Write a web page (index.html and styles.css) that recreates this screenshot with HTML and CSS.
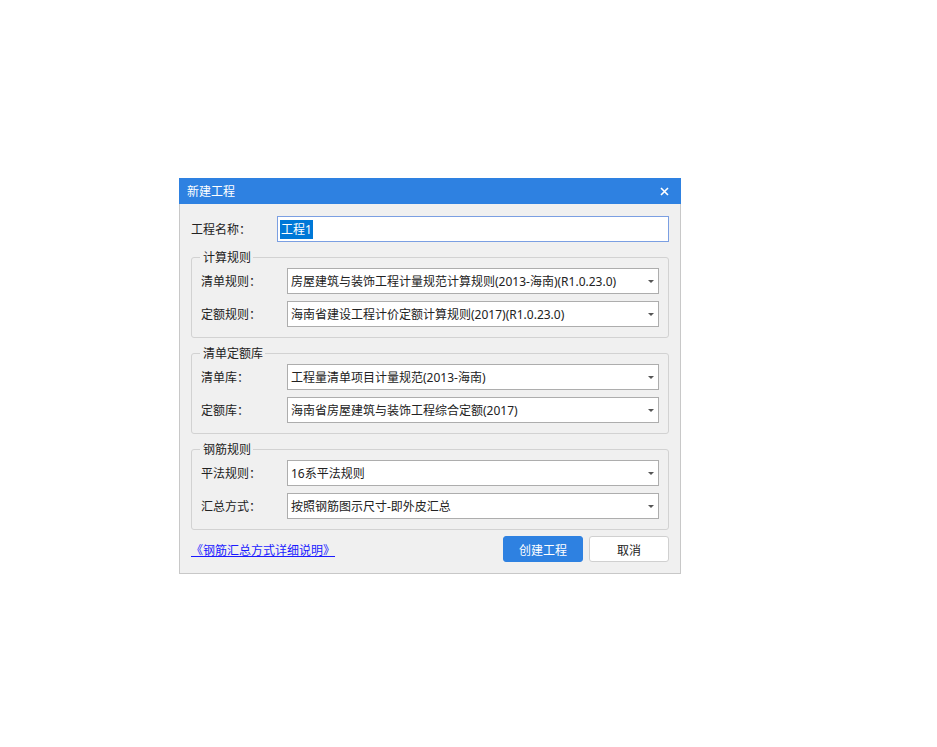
FILE: index.html
```html
<!DOCTYPE html>
<html lang="zh-CN">
<head>
<meta charset="utf-8">
<title>新建工程</title>
<link rel="stylesheet" href="styles.css">
</head>
<body>
<div class="dialog">
  <div class="titlebar">
    <span class="title">新建工程</span>
    <svg class="close" width="9" height="9" viewBox="0 0 9 9"><path d="M1 1L8 8M8 1L1 8" stroke="#fff" stroke-width="1.6" fill="none"/></svg>
  </div>
  <div class="body">
    <div class="row name-row">
      <span class="label">工程名称：</span>
      <div class="input"><span class="sel">工程1</span></div>
    </div>

    <div class="group">
      <span class="legend">计算规则</span>
      <div class="row">
        <span class="label">清单规则：</span>
        <div class="select"><span class="val">房屋建筑与装饰工程计量规范计算规则(2013-海南)(R1.0.23.0)</span><span class="arrow"></span></div>
      </div>
      <div class="row">
        <span class="label">定额规则：</span>
        <div class="select"><span class="val">海南省建设工程计价定额计算规则(2017)(R1.0.23.0)</span><span class="arrow"></span></div>
      </div>
    </div>

    <div class="group">
      <span class="legend">清单定额库</span>
      <div class="row">
        <span class="label">清单库：</span>
        <div class="select"><span class="val">工程量清单项目计量规范(2013-海南)</span><span class="arrow"></span></div>
      </div>
      <div class="row">
        <span class="label">定额库：</span>
        <div class="select"><span class="val">海南省房屋建筑与装饰工程综合定额(2017)</span><span class="arrow"></span></div>
      </div>
    </div>

    <div class="group">
      <span class="legend">钢筋规则</span>
      <div class="row">
        <span class="label">平法规则：</span>
        <div class="select"><span class="val">16系平法规则</span><span class="arrow"></span></div>
      </div>
      <div class="row">
        <span class="label">汇总方式：</span>
        <div class="select"><span class="val">按照钢筋图示尺寸-即外皮汇总</span><span class="arrow"></span></div>
      </div>
    </div>

    <div class="footer">
      <a class="link" href="#">《钢筋汇总方式详细说明》</a>
      <div class="buttons">
        <button class="btn primary">创建工程</button>
        <button class="btn">取消</button>
      </div>
    </div>
  </div>
</div>
</body>
</html>
```

FILE: styles.css
```css
* { box-sizing: border-box; }
html, body { margin: 0; padding: 0; background: #ffffff; }
body {
  font-family: "Noto Sans", "Noto Sans CJK SC", "Liberation Sans", sans-serif;
  font-size: 12px;
  color: #222;
}
.dialog {
  margin: 178px 0 0 179px;
  width: 502px;
}
.titlebar {
  height: 26px;
  background: #2e81e1;
  color: #fff;
  display: flex;
  align-items: center;
  justify-content: space-between;
  padding: 0 12px 0 8px;
}
.title { font-size: 12px; line-height: 16px; padding-top: 2px; }
.close { display: block; }
.body {
  background: #f0f0f0;
  border: 1px solid #c8c8c8;
  border-top: none;
  padding: 12px 11px 11px 11px;
  display: flex;
  flex-direction: column;
  gap: 15px;
}
.row {
  display: flex;
  align-items: center;
  height: 26px;
}
.label {
  width: 86px;
  flex: none;
  line-height: 16px;
  padding-top: 2px;
}
.input {
  flex: 1;
  height: 26px;
  background: #fff;
  border: 1px solid #7b9fe2;
  display: flex;
  align-items: center;
  padding-left: 2px;
}
.sel {
  background: #0078d7;
  color: #fff;
  line-height: 18px;
  padding: 1px 1px 0;
}
.group {
  position: relative;
  border: 1px solid #d2d2d2;
  border-radius: 3px;
  padding: 10px 9px;
  display: flex;
  flex-direction: column;
  gap: 7px;
}
.legend {
  position: absolute;
  top: -9px;
  left: 8px;
  padding: 1px 2px 0 3px;
  background: #f0f0f0;
  line-height: 16px;
  color: #222;
}
.select {
  flex: 1;
  height: 26px;
  background: #fff;
  border: 1px solid #adadad;
  display: flex;
  align-items: center;
  justify-content: space-between;
  padding: 0 4px 0 3px;
}
.val { line-height: 16px; white-space: nowrap; padding-top: 2px; }
.arrow {
  width: 0;
  height: 0;
  border-left: 3px solid transparent;
  border-right: 3px solid transparent;
  border-top: 3px solid #555;
}
.footer {
  display: flex;
  align-items: center;
  justify-content: space-between;
  margin-top: -9px;
}
.link {
  color: #1a1aff;
  text-decoration: underline;
  line-height: 16px;
  margin-top: 3px;
}
.buttons { display: flex; gap: 6px; }
.btn {
  width: 80px;
  height: 26px;
  font-family: inherit;
  font-size: 12px;
  color: #222;
  background: #fff;
  border: 1px solid #d0d0d0;
  border-radius: 3px;
  padding: 2px 0 0;
}
.btn.primary {
  background: #2e81e1;
  border-color: #2e81e1;
  color: #fff;
}
```
